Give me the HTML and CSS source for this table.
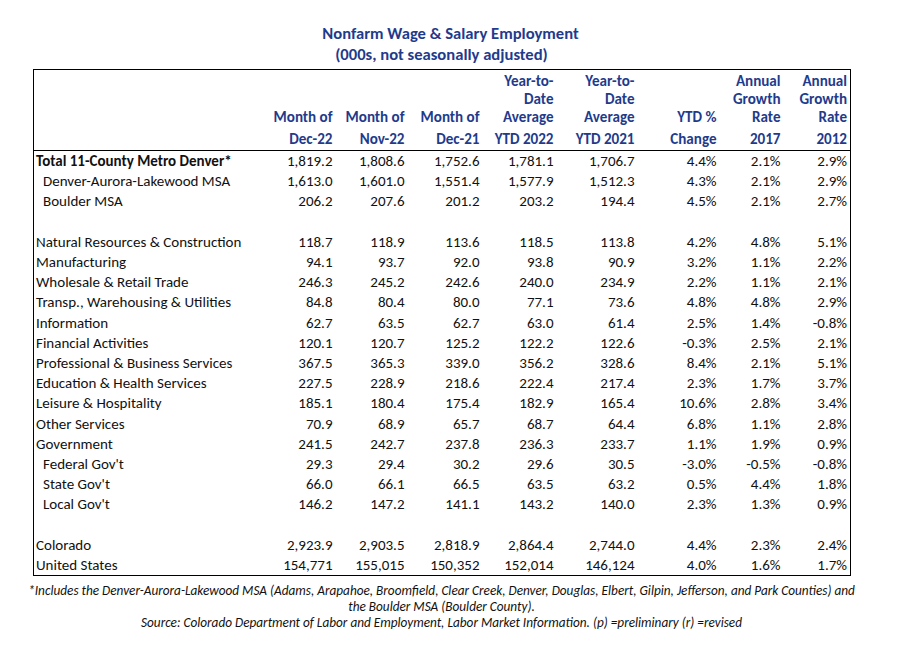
FILE: index.html
```html
<!DOCTYPE html>
<html>
<head>
<meta charset="utf-8">
<link rel="stylesheet" href="styles.css">
</head>
<body>
<div class="page">
  <div class="title">
    <div class="t1">Nonfarm Wage &amp; Salary Employment</div>
    <div class="t2">(000s, not seasonally adjusted)</div>
  </div>
  <table class="data">
    <colgroup>
      <col class="c-label"><col class="c2"><col class="c3"><col class="c4"><col class="c5"><col class="c6"><col class="c7"><col class="c8"><col class="c9">
    </colgroup>
    <thead>
      <tr class="h1">
        <th></th>
        <th>Month of</th>
        <th>Month of</th>
        <th>Month of</th>
        <th>Year-to-<br>Date<br>Average</th>
        <th>Year-to-<br>Date<br>Average</th>
        <th>YTD %</th>
        <th>Annual<br>Growth<br>Rate</th>
        <th>Annual<br>Growth<br>Rate</th>
      </tr>
      <tr class="h2">
        <th></th>
        <th>Dec-22</th>
        <th>Nov-22</th>
        <th>Dec-21</th>
        <th>YTD 2022</th>
        <th>YTD 2021</th>
        <th>Change</th>
        <th>2017</th>
        <th>2012</th>
      </tr>
    </thead>
    <tbody>
      <tr><td class="lbl bold">Total 11-County Metro Denver*</td><td>1,819.2</td><td>1,808.6</td><td>1,752.6</td><td>1,781.1</td><td>1,706.7</td><td>4.4%</td><td>2.1%</td><td>2.9%</td></tr>
      <tr><td class="lbl ind">Denver-Aurora-Lakewood MSA</td><td>1,613.0</td><td>1,601.0</td><td>1,551.4</td><td>1,577.9</td><td>1,512.3</td><td>4.3%</td><td>2.1%</td><td>2.9%</td></tr>
      <tr><td class="lbl ind">Boulder MSA</td><td>206.2</td><td>207.6</td><td>201.2</td><td>203.2</td><td>194.4</td><td>4.5%</td><td>2.1%</td><td>2.7%</td></tr>
      <tr class="blank"><td colspan="9"></td></tr>
      <tr><td class="lbl">Natural Resources &amp; Construction</td><td>118.7</td><td>118.9</td><td>113.6</td><td>118.5</td><td>113.8</td><td>4.2%</td><td>4.8%</td><td>5.1%</td></tr>
      <tr><td class="lbl">Manufacturing</td><td>94.1</td><td>93.7</td><td>92.0</td><td>93.8</td><td>90.9</td><td>3.2%</td><td>1.1%</td><td>2.2%</td></tr>
      <tr><td class="lbl">Wholesale &amp; Retail Trade</td><td>246.3</td><td>245.2</td><td>242.6</td><td>240.0</td><td>234.9</td><td>2.2%</td><td>1.1%</td><td>2.1%</td></tr>
      <tr><td class="lbl">Transp., Warehousing &amp; Utilities</td><td>84.8</td><td>80.4</td><td>80.0</td><td>77.1</td><td>73.6</td><td>4.8%</td><td>4.8%</td><td>2.9%</td></tr>
      <tr><td class="lbl">Information</td><td>62.7</td><td>63.5</td><td>62.7</td><td>63.0</td><td>61.4</td><td>2.5%</td><td>1.4%</td><td>-0.8%</td></tr>
      <tr><td class="lbl">Financial Activities</td><td>120.1</td><td>120.7</td><td>125.2</td><td>122.2</td><td>122.6</td><td>-0.3%</td><td>2.5%</td><td>2.1%</td></tr>
      <tr><td class="lbl">Professional &amp; Business Services</td><td>367.5</td><td>365.3</td><td>339.0</td><td>356.2</td><td>328.6</td><td>8.4%</td><td>2.1%</td><td>5.1%</td></tr>
      <tr><td class="lbl">Education &amp; Health Services</td><td>227.5</td><td>228.9</td><td>218.6</td><td>222.4</td><td>217.4</td><td>2.3%</td><td>1.7%</td><td>3.7%</td></tr>
      <tr><td class="lbl">Leisure &amp; Hospitality</td><td>185.1</td><td>180.4</td><td>175.4</td><td>182.9</td><td>165.4</td><td>10.6%</td><td>2.8%</td><td>3.4%</td></tr>
      <tr><td class="lbl">Other Services</td><td>70.9</td><td>68.9</td><td>65.7</td><td>68.7</td><td>64.4</td><td>6.8%</td><td>1.1%</td><td>2.8%</td></tr>
      <tr><td class="lbl">Government</td><td>241.5</td><td>242.7</td><td>237.8</td><td>236.3</td><td>233.7</td><td>1.1%</td><td>1.9%</td><td>0.9%</td></tr>
      <tr><td class="lbl ind">Federal Gov't</td><td>29.3</td><td>29.4</td><td>30.2</td><td>29.6</td><td>30.5</td><td>-3.0%</td><td>-0.5%</td><td>-0.8%</td></tr>
      <tr><td class="lbl ind">State Gov't</td><td>66.0</td><td>66.1</td><td>66.5</td><td>63.5</td><td>63.2</td><td>0.5%</td><td>4.4%</td><td>1.8%</td></tr>
      <tr><td class="lbl ind">Local Gov't</td><td>146.2</td><td>147.2</td><td>141.1</td><td>143.2</td><td>140.0</td><td>2.3%</td><td>1.3%</td><td>0.9%</td></tr>
      <tr><td colspan="9"></td></tr>
      <tr><td class="lbl">Colorado</td><td>2,923.9</td><td>2,903.5</td><td>2,818.9</td><td>2,864.4</td><td>2,744.0</td><td>4.4%</td><td>2.3%</td><td>2.4%</td></tr>
      <tr><td class="lbl">United States</td><td>154,771</td><td>155,015</td><td>150,352</td><td>152,014</td><td>146,124</td><td>4.0%</td><td>1.6%</td><td>1.7%</td></tr>
    </tbody>
  </table>
  <div class="notes">
    <div>*Includes the Denver-Aurora-Lakewood MSA (Adams, Arapahoe, Broomfield, Clear Creek, Denver, Douglas, Elbert, Gilpin, Jefferson, and Park Counties) and</div>
    <div>the Boulder MSA (Boulder County).</div>
    <div>Source: Colorado Department of Labor and Employment, Labor Market Information. (p) =preliminary (r) =revised</div>
  </div>
</div>
</body>
</html>
```
FILE: styles.css
```css
html, body {
  margin: 0;
  padding: 0;
  background: #ffffff;
}

body {
  font-family: Carlito, Calibri, "Lato", "Liberation Sans", sans-serif;
  color: #111111;
}

.page {
  width: 817px;
  padding: 23px 0 0 33px;
}

.title {
  color: #1f3b8c;
  font-weight: bold;
  font-size: 16.6px;
  line-height: 21px;
  text-align: center;
  margin-bottom: 4px;
}

.title .t1 {
  padding-left: 18px;
}

.data {
  width: 817px;
  table-layout: fixed;
  border-collapse: collapse;
  border: 1px solid #000000;
  font-size: 15px;
}

.c-label { width: 229px; }
.c2 { width: 73px; }
.c3 { width: 72px; }
.c4 { width: 75px; }
.c5 { width: 74px; }
.c6 { width: 81px; }
.c7 { width: 82px; }
.c8 { width: 64px; }
.c9 { width: 67px; }

.data th {
  color: #1f3b8c;
  font-weight: bold;
  font-size: 15.1px;
  text-align: right;
  padding: 0 3px 0 0;
  line-height: 18px;
  white-space: nowrap;
}

.data tr.h1 th {
  height: 56px;
  vertical-align: bottom;
  padding-bottom: 2px;
}

.data tr.h2 th {
  height: 22px;
  vertical-align: middle;
}

.data thead tr.h2 {
  border-bottom: 1px solid #000000;
}

.data td {
  height: 20.2px;
  padding: 0 3px 0 0;
  text-align: right;
  line-height: 16px;
  white-space: nowrap;
}

.data td.lbl {
  text-align: left;
  padding-left: 2px;
}

.data td.ind {
  padding-left: 9px;
}

.data td.bold {
  font-weight: bold;
}

.notes {
  font-style: italic;
  font-size: 13.25px;
  line-height: 16px;
  text-align: center;
  color: #111111;
  padding-top: 7px;
  margin: 0 -30px;
  white-space: nowrap;
}
```
